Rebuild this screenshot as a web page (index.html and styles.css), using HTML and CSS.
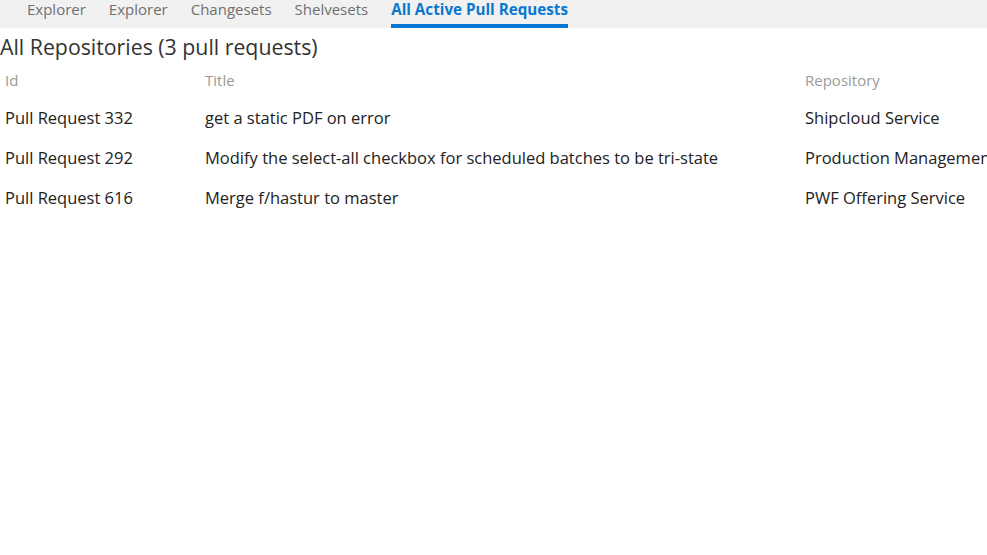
FILE: index.html
```html
<!DOCTYPE html>
<html>
<head>
<meta charset="utf-8">
<link rel="stylesheet" href="styles.css">
</head>
<body>
<nav class="tabs">
  <span class="tab">Explorer</span>
  <span class="tab">Explorer</span>
  <span class="tab">Changesets</span>
  <span class="tab">Shelvesets</span>
  <span class="tab active">All Active Pull Requests</span>
</nav>
<h1 class="title">All Repositories (3 pull requests)</h1>
<div class="grid">
  <div class="row head">
    <div class="c-id">Id</div>
    <div class="c-title">Title</div>
    <div class="c-repo">Repository</div>
  </div>
  <div class="row">
    <div class="c-id">Pull Request 332</div>
    <div class="c-title">get a static PDF on error</div>
    <div class="c-repo">Shipcloud Service</div>
  </div>
  <div class="row">
    <div class="c-id">Pull Request 292</div>
    <div class="c-title">Modify the select-all checkbox for scheduled batches to be tri-state</div>
    <div class="c-repo">Production Management Service</div>
  </div>
  <div class="row">
    <div class="c-id">Pull Request 616</div>
    <div class="c-title">Merge f/hastur to master</div>
    <div class="c-repo">PWF Offering Service</div>
  </div>
</div>
</body>
</html>
```
FILE: styles.css
```css
html, body {
  margin: 0;
  padding: 0;
  background: #fff;
  overflow: hidden;
}
body {
  font-family: "Open Sans", "Noto Sans", sans-serif;
  color: #222;
}
.tabs {
  display: flex;
  height: 28px;
  background: #f1f1f1;
  padding-left: 27px;
}
.tab {
  font-size: 15px;
  color: #707070;
  line-height: 18px;
  margin-right: 23px;
}
.tab.active {
  color: #0a78cf;
  font-weight: 700;
  font-size: 15.2px;
  border-bottom: 4px solid #0078d4;
  height: 24px;
}
.title {
  font-weight: 400;
  font-size: 21.3px;
  color: #333;
  margin: 5px 0 0 0;
  line-height: 28px;
}
.grid {
  width: 1200px;
}
.row {
  display: flex;
  height: 40px;
  align-items: center;
  font-size: 16.5px;
  white-space: nowrap;
}
.row.head {
  height: 26px;
  color: #9a9a9a;
  font-size: 15px;
  margin-top: 6px;
  margin-bottom: 4px;
}
.c-id { width: 200px; padding-left: 5px; }
.c-title { width: 600px; }
.c-repo { flex: 1; }
```
